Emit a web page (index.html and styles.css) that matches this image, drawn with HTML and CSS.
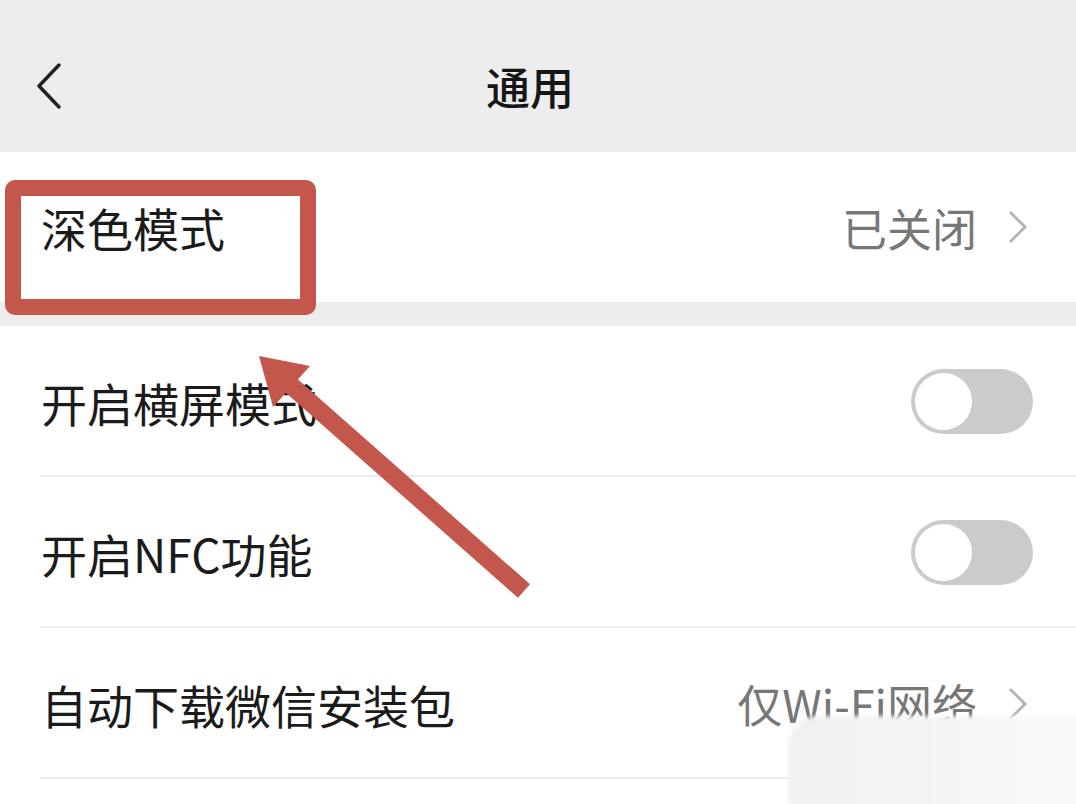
FILE: index.html
```html
<!DOCTYPE html>
<html lang="zh-CN">
<head>
    <meta charset="UTF-8">
    <meta name="viewport" content="width=device-width, initial-scale=1.0">
    <title>通用</title>
    <link rel="stylesheet" href="styles.css">
</head>
<body>
    <div class="page">
        <div class="nav">
            <svg class="back" width="30" height="50" viewBox="0 0 30 50">
                <polyline points="25,3 5,24 25,45" fill="none" stroke="#222" stroke-width="3.5" stroke-linecap="round" stroke-linejoin="round"/>
            </svg>
            <div class="title">通用</div>
        </div>

        <div class="group">
            <div class="row">
                <span class="label">深色模式</span>
                <span class="value">已关闭
                    <svg class="arrow-right" width="22" height="36" viewBox="0 0 22 36">
                        <polyline points="3,3 18,18 3,33" fill="none" stroke="#b5b5b5" stroke-width="3"/>
                    </svg>
                </span>
            </div>
        </div>

        <div class="group gap">
            <div class="row line">
                <span class="label">开启横屏模式</span>
                <span class="switch"><span class="knob"></span></span>
            </div>
            <div class="row line">
                <span class="label">开启NFC功能</span>
                <span class="switch"><span class="knob"></span></span>
            </div>
            <div class="row line">
                <span class="label">自动下载微信安装包</span>
                <span class="value">仅Wi-Fi网络
                    <svg class="arrow-right" width="22" height="36" viewBox="0 0 22 36">
                        <polyline points="3,3 18,18 3,33" fill="none" stroke="#b5b5b5" stroke-width="3"/>
                    </svg>
                </span>
            </div>
            <div class="row"></div>
        </div>

        <!-- annotation on top of the screenshot -->
        <div class="mark-box"></div>
        <svg class="mark-arrow" width="1076" height="804" viewBox="0 0 1076 804">
            <line x1="524" y1="591" x2="285" y2="380" stroke="#c4574c" stroke-width="18"/>
            <polygon points="259,356 310,366 273,407" fill="#c4574c"/>
        </svg>
        <div class="smudge"></div>
    </div>
</body>
</html>
```

FILE: styles.css
```css
body {
    margin: 0;
    background-color: #fff;
    font-family: "Noto Sans CJK SC", "Noto Sans", sans-serif;
    color: #1b1b1b;
}
.page {
    position: relative;
    width: 1076px;
    height: 804px;
    overflow: hidden;
}
.nav {
    height: 152px;
    background-color: #ededed;
    display: flex;
    align-items: center;
    justify-content: center;
    position: relative;
}
.back {
    position: absolute;
    left: 34px;
    top: 62px;
}
.title {
    font-size: 44px;
    font-weight: 500;
    color: #161616;
    margin-right: 16px;
    margin-top: 20px;
}
.group {
    background-color: #fff;
}
.gap {
    border-top: 24px solid #ededed;
}
.row {
    height: 150px;
    display: flex;
    align-items: center;
    justify-content: space-between;
    padding: 0 43px 0 41px;
    position: relative;
}
.row.line::after {
    content: "";
    position: absolute;
    left: 40px;
    right: 0;
    bottom: 0;
    height: 2px;
    background-color: #ececec;
}
.row.line {
    height: 151px;
    box-sizing: border-box;
}
.label {
    font-size: 46px;
    line-height: 1;
}
.value {
    font-size: 45px;
    color: #777;
    display: flex;
    align-items: center;
    gap: 30px;
    margin-right: 4px;
}
.arrow-right {
    display: block;
}
.switch {
    width: 122px;
    height: 65px;
    border-radius: 33px;
    background-color: #cbcbcb;
    position: relative;
}
.knob {
    position: absolute;
    left: 4px;
    top: 4px;
    width: 57px;
    height: 57px;
    border-radius: 50%;
    background-color: #fff;
}
.mark-box {
    position: absolute;
    left: 5px;
    top: 180px;
    width: 279px;
    height: 103px;
    border: 16px solid #c4574c;
    border-radius: 10px;
}
.mark-arrow {
    position: absolute;
    left: 0;
    top: 0;
    pointer-events: none;
}
.smudge {
    position: absolute;
    left: 788px;
    top: 716px;
    width: 310px;
    height: 110px;
    border-radius: 30px 0 0 30px;
    background: linear-gradient(90deg, #f1f1f1, #f5f5f5 50%, #fbfbfb);
    filter: blur(2px);
}
```
